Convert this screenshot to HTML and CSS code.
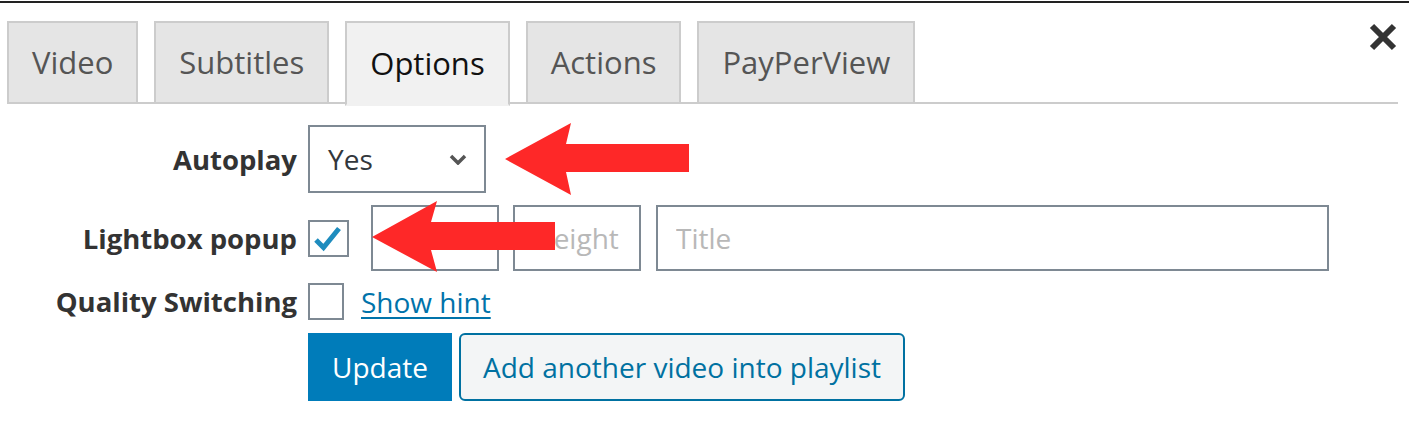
FILE: index.html
```html
<!DOCTYPE html>
<html lang="en">
<head>
<meta charset="utf-8">
<title>Options</title>
<link rel="stylesheet" href="styles.css">
</head>
<body>
<div class="topline"></div>
<div class="modal">
  <button class="close" aria-label="Close">
    <svg width="28" height="28" viewBox="0 0 28 28"><path d="M3 3 L25 25 M25 3 L3 25" stroke="#333" stroke-width="6" fill="none"/></svg>
  </button>
  <div class="tabs">
    <div class="tab">Video</div>
    <div class="tab">Subtitles</div>
    <div class="tab active">Options</div>
    <div class="tab">Actions</div>
    <div class="tab">PayPerView</div>
  </div>
  <div class="form">
    <label class="label">Autoplay</label>
    <div class="ctrl">
      <div class="select">
        <span>Yes</span>
        <svg width="18" height="11" viewBox="0 0 18 11"><path d="M2 2 L9 9 L16 2" stroke="#555" stroke-width="3.5" fill="none"/></svg>
      </div>
    </div>

    <label class="label">Lightbox popup</label>
    <div class="ctrl">
      <span class="check checked">
        <svg width="41" height="37" viewBox="0 0 41 37"><path d="M8 20 L15.5 27.5 L31 8.5" stroke="#1e8cbe" stroke-width="5" fill="none"/></svg>
      </span>
      <input class="field small first" placeholder="Width">
      <input class="field small" placeholder="Height">
      <input class="field title" placeholder="Title">
    </div>

    <label class="label">Quality Switching</label>
    <div class="ctrl">
      <span class="check narrow"></span>
      <a class="hint" href="#">Show hint</a>
    </div>

    <div></div>
    <div class="ctrl buttons">
      <button class="btn primary">Update</button>
      <button class="btn secondary">Add another video into playlist</button>
    </div>
  </div>
  <svg class="arrows" width="1409" height="433" viewBox="0 0 1409 433">
    <polygon points="505,159 571,123 566,144 689,144 689,172 566,172 571,195" fill="#fe2828"/>
    <polygon points="372,237 437,201 431,222 555,222 555,250 431,250 437,272" fill="#fe2828"/>
  </svg>
</div>
</body>
</html>
```

FILE: styles.css
```css
* { box-sizing: border-box; }
html, body { margin: 0; padding: 0; background: #fff; }
body {
  font-family: "Open Sans", "Noto Sans", sans-serif;
  color: #23282d;
  width: 1409px;
  height: 433px;
  overflow: hidden;
}
.topline {
  height: 2px;
  margin-top: 1px;
  background: #222;
}
.modal {
  position: relative;
  padding: 18px 11px 0 7px;
}
.close {
  position: absolute;
  top: 20px;
  right: 12px;
  border: 0;
  padding: 0;
  background: none;
  width: 28px;
  height: 28px;
}
.close svg { display: block; }
.tabs {
  display: flex;
  gap: 16px;
  border-bottom: 2px solid #ccc;
  height: 83px;
}
.tab {
  height: 83px;
  padding: 0 23px 2px;
  display: flex;
  align-items: center;
  background: #e5e5e5;
  border: 2px solid #ccc;
  font-size: 31px;
  color: #555;
}
.tab.active {
  background: #f1f1f1;
  border-bottom-color: #f1f1f1;
  color: #111;
  height: 85px;
}
.form {
  display: grid;
  grid-template-columns: 290px 1fr;
  column-gap: 11px;
  grid-template-rows: 68px 66px 37px 68px;
  row-gap: 12px;
  padding-top: 21px;
  align-items: center;
}
.label {
  text-align: right;
  font-weight: bold;
  font-size: 27.5px;
  color: #333;
  white-space: nowrap;
}
.ctrl {
  display: flex;
  align-items: center;
}
.select {
  width: 178px;
  height: 68px;
  border: 2px solid #7e8993;
  display: flex;
  align-items: center;
  justify-content: space-between;
  padding: 0 17px 0 18px;
  font-size: 28px;
  color: #32373c;
}
.check {
  width: 41px;
  height: 37px;
  border: 2px solid #7e8993;
  display: block;
  position: relative;
  background: #fff;
}
.check.narrow { width: 36px; }
.check svg {
  position: absolute;
  left: -2px;
  top: -2px;
}
.field {
  height: 66px;
  border: 2px solid #7e8993;
  font-family: inherit;
  font-size: 28px;
  padding: 0 18px;
  color: #32373c;
  background: #fff;
  outline: none;
}
.field::placeholder { color: #b8b8b8; }
.field.small { width: 128px; margin-left: 14px; }
.field.small.first { margin-left: 22px; }
.field.title { width: 673px; margin-left: 15px; }
.hint {
  margin-left: 17px;
  font-size: 28px;
  color: #0073aa;
  text-decoration: underline;
  text-underline-offset: 4px;
}
.buttons { gap: 7px; margin-top: 2px; }
.btn {
  height: 68px;
  font-family: inherit;
  font-size: 28px;
  border-radius: 6px;
  padding: 0;
  cursor: pointer;
}
.btn.primary {
  width: 144px;
  background: #007cba;
  border: 2px solid #007cba;
  color: #fff;
  border-radius: 0;
}
.btn.secondary {
  width: 446px;
  background: #f3f5f6;
  border: 2px solid #0071a1;
  color: #0071a1;
}
.arrows {
  position: absolute;
  left: 0;
  top: -3px;
  pointer-events: none;
}
```
